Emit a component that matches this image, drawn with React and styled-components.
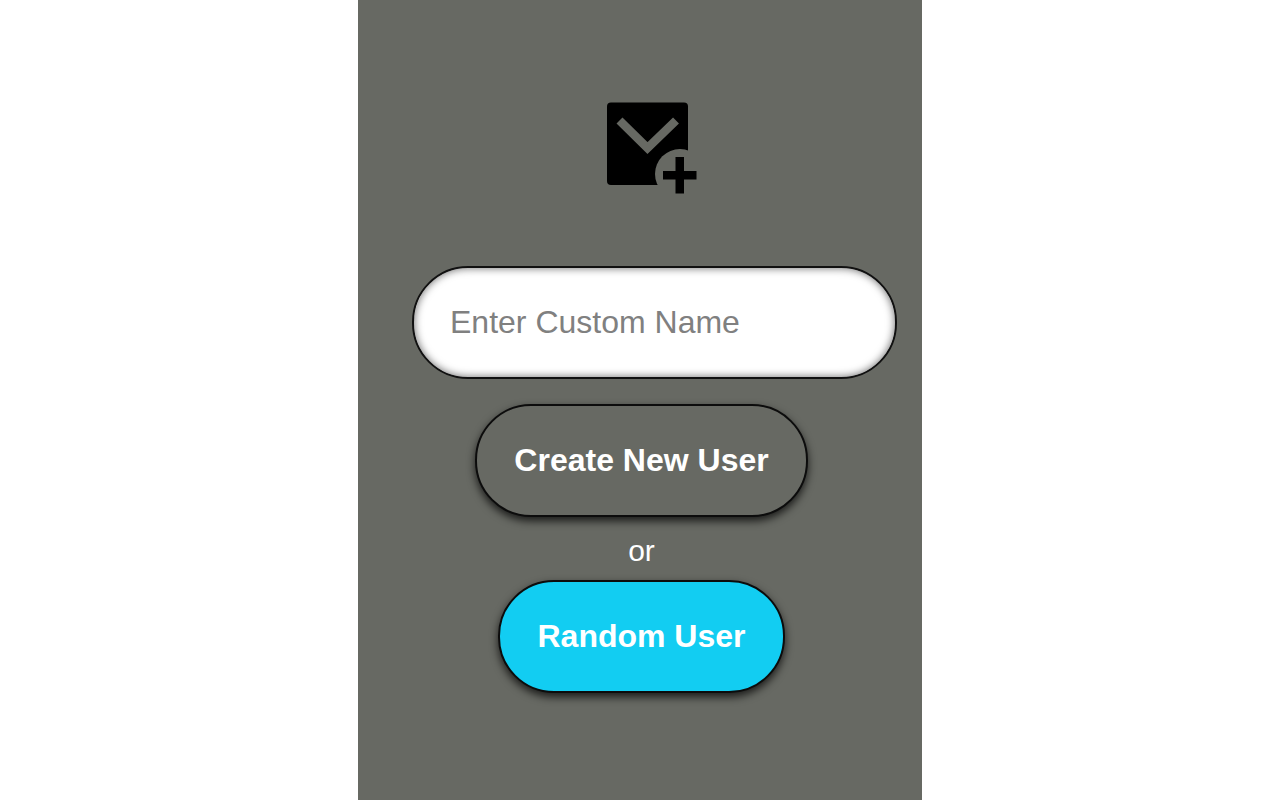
import React from "react";
import styled, { createGlobalStyle } from "styled-components";

const GlobalStyle = createGlobalStyle`
  * { box-sizing: border-box; }
  body {
    margin: 0;
    background: #fff;
    font-family: "Liberation Sans", Arial, sans-serif;
  }
`;

const Panel = styled.main`
  display: flex;
  flex-direction: column;
  align-items: center;
  width: 44%;
  min-width: min(564px, 100%);
  min-height: 100vh;
  margin: 0 auto;
  padding: 100px 25px 40px 54px;
  background: #676963;
`;

const MailIcon = styled.svg`
  display: block;
  width: 96px;
  height: 96px;
  margin-bottom: 70px;
`;

const Form = styled.form`
  display: flex;
  flex-direction: column;
  align-items: center;
  width: 100%;
`;

const NameInput = styled.input`
  width: 100%;
  height: 113px;
  padding: 0 36px;
  border: 2px solid #111;
  border-radius: 56px;
  background: #fff;
  box-shadow: inset 0 0 8px rgba(0, 0, 0, 0.6);
  color: #222;
  font: 32px "Liberation Sans", Arial, sans-serif;
  outline: none;

  &::placeholder {
    color: #808080;
    opacity: 1;
  }
`;

const Actions = styled.div`
  display: flex;
  flex-direction: column;
  align-items: center;
  width: 100%;
  margin-top: 25px;
  padding-right: 26px;
`;

const PillButton = styled.button`
  height: 113px;
  padding: 0 37px;
  border: 2px solid #0c0c0c;
  border-radius: 56px;
  background: ${({ $fill }) => $fill};
  box-shadow: 0 4px 8px rgba(0, 0, 0, 0.75);
  color: #fff;
  font: bold 32px "Liberation Sans", Arial, sans-serif;
  white-space: nowrap;
  cursor: pointer;
`;

const Divider = styled.span`
  padding: 17px 0 13px;
  color: #fff;
  font-size: 30px;
  line-height: 33px;
`;

export default function App() {
  return (
    <>
      <GlobalStyle />
      <Panel>
        <MailIcon viewBox="3 0 96 96" aria-hidden="true">
          <defs>
            <mask id="badge-cutout">
              <rect width="100" height="96" fill="#fff" />
              <path d="M15.5 20.5 43.5 48 72 20.5" fill="none" stroke="#000" strokeWidth="8.5" />
              <circle cx="76" cy="74" r="25" fill="#000" />
            </mask>
          </defs>
          <rect x="3" y="2.5" width="81" height="82.5" rx="4" mask="url(#badge-cutout)" />
          <path d="M71.5 57h8.5v14h12.5v8.5H80v14h-8.5v-14H59V71h12.5Z" />
        </MailIcon>
        <Form onSubmit={(event) => event.preventDefault()}>
          <NameInput type="text" placeholder="Enter Custom Name" aria-label="Enter Custom Name" />
          <Actions>
            <PillButton type="submit" $fill="#676963">Create New User</PillButton>
            <Divider>or</Divider>
            <PillButton type="button" $fill="#12cdf2">Random User</PillButton>
          </Actions>
        </Form>
      </Panel>
    </>
  );
}
